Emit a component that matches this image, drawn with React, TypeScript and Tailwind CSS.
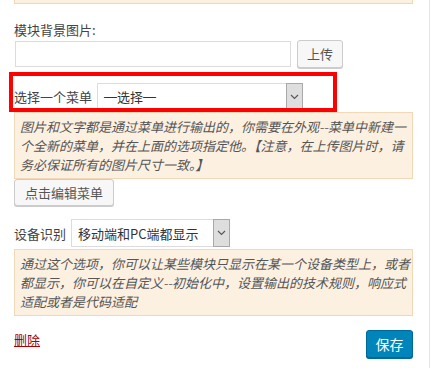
import React from "react";

const font = { fontFamily: '"Noto Sans CJK SC", "Noto Sans", sans-serif' };

function Chevron() {
  return (
    <svg width="9" height="6" viewBox="0 0 9 6" fill="none">
      <path d="M1 1l3.5 3.5L8 1" stroke="#555" strokeWidth="1.1" />
    </svg>
  );
}

function FakeSelect({ children, w, h }: { children: React.ReactNode; w: string; h: string }) {
  return (
    <div className={`flex ${w} ${h} border border-[#dcdcdc] bg-white`}>
      <div className="flex-1 flex items-center pl-[6px] text-[13px] text-[#333] whitespace-nowrap overflow-hidden">{children}</div>
      <div className="w-[17px] flex items-center justify-center bg-[#dedede] border border-[#a9a9a9] -m-px">
        <Chevron />
      </div>
    </div>
  );
}

export default function App() {
  return (
    <div className="relative w-[434px] h-[368px] bg-white overflow-hidden" style={font}>
      <div className="w-[430px] h-full border-r border-[#e5e5e5]">
        <div className="ml-[14px] w-[399px] flex flex-col">
          <div className="h-[4px] bg-[#fcf0e1] border-x border-b border-[#f2d8b6]" />
          <div className="mt-[16px] text-[13px] leading-[20px] text-[#444]">模块背景图片:</div>
          <div className="flex items-center h-[28px] ml-px">
            <div className="w-[276px] h-[26px] border border-[#dcdcdc] bg-white" />
            <button className="ml-[6px] w-[46px] h-[28px] rounded-[3px] border border-[#cccccc] bg-[#f7f7f7] shadow-[0_1px_0_#cccccc] text-[13px] text-[#555]">上传</button>
          </div>
          <div className="mt-[15px] flex items-center h-[27px]">
            <span className="text-[13px] text-[#444] w-[83px] whitespace-nowrap">选择一个菜单</span>
            <FakeSelect w="w-[206px]" h="h-[27px]">
              <span className="font-['Liberation_Sans']">—</span>选择<span className="font-['Liberation_Sans']">—</span>
            </FakeSelect>
          </div>
          <div className="mt-[2px] bg-[#fcf0e1] border border-[#f2d8b6] py-[4px] pl-[5px] text-[13px] leading-[19px] italic text-[#555] whitespace-nowrap">
            图片和文字都是通过菜单进行输出的，你需要在外观--菜单中新建一<br />
            个全新的菜单，并在上面的选项指定他。【注意，在上传图片时，请<br />
            务必保证所有的图片尺寸一致。】
          </div>
          <div className="mt-0">
            <button className="w-[100px] h-[27px] rounded-[3px] border border-[#cccccc] bg-[#f7f7f7] shadow-[0_1px_0_#cccccc] text-[13px] text-[#555]">点击编辑菜单</button>
          </div>
          <div className="mt-[13px] flex items-center h-[28px]">
            <span className="text-[13px] text-[#444] w-[57px] whitespace-nowrap">设备识别</span>
            <FakeSelect w="w-[159px]" h="h-[28px]">移动端和PC端都显示</FakeSelect>
          </div>
          <div className="mt-[2px] bg-[#fcf0e1] border border-[#f2d8b6] py-[4px] pl-[5px] text-[13px] leading-[19px] italic text-[#555] whitespace-nowrap">
            通过这个选项，你可以让某些模块只显示在某一个设备类型上，或者<br />
            都显示，你可以在自定义--初始化中，设置输出的技术规则，响应式<br />
            适配或者是代码适配
          </div>
          <div className="mt-[14px] flex items-start justify-between">
            <a className="text-[13px] leading-[20px] text-[#a00] underline cursor-pointer">删除</a>
            <button className="w-[47px] h-[28px] rounded-[3px] border border-[#006799] bg-[#0085ba] shadow-[0_1px_0_#006799] text-[14px] text-white">保存</button>
          </div>
        </div>
      </div>
      <div className="absolute left-[9px] top-[72px] w-[328px] h-[40px] border-4 border-[#ff0000] pointer-events-none" />
    </div>
  );
}
